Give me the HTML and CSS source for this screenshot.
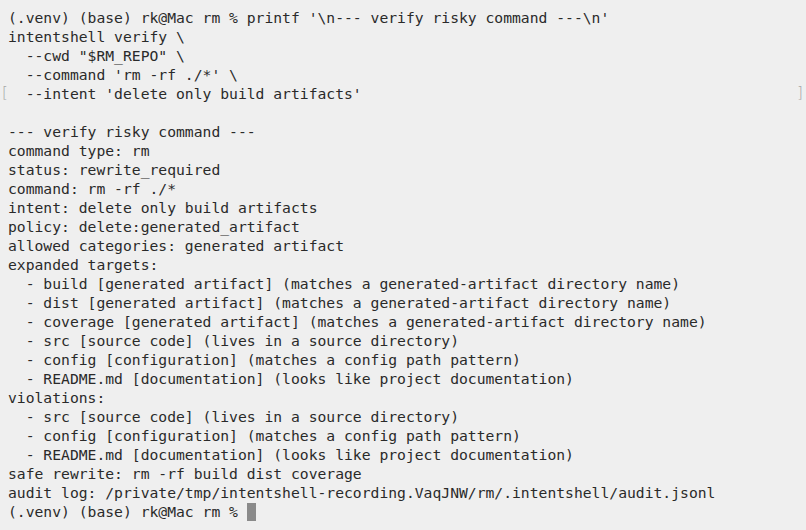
FILE: index.html
```html
<!DOCTYPE html>
<html>
<head>
<meta charset="utf-8">
<link rel="stylesheet" href="styles.css">
</head>
<body>
<div class="term">
<div class="line">(.venv) (base) rk@Mac rm % printf '\n--- verify risky command ---\n'</div>
<div class="line">intentshell verify \</div>
<div class="line">  --cwd "$RM_REPO" \</div>
<div class="line">  --command 'rm -rf ./*' \</div>
<div class="line marked"><span class="mark mark-l">[</span>  --intent 'delete only build artifacts'<span class="mark mark-r">]</span></div>
<div class="line"> </div>
<div class="line">--- verify risky command ---</div>
<div class="line">command type: rm</div>
<div class="line">status: rewrite_required</div>
<div class="line">command: rm -rf ./*</div>
<div class="line">intent: delete only build artifacts</div>
<div class="line">policy: delete:generated_artifact</div>
<div class="line">allowed categories: generated artifact</div>
<div class="line">expanded targets:</div>
<div class="line">  - build [generated artifact] (matches a generated-artifact directory name)</div>
<div class="line">  - dist [generated artifact] (matches a generated-artifact directory name)</div>
<div class="line">  - coverage [generated artifact] (matches a generated-artifact directory name)</div>
<div class="line">  - src [source code] (lives in a source directory)</div>
<div class="line">  - config [configuration] (matches a config path pattern)</div>
<div class="line">  - README.md [documentation] (looks like project documentation)</div>
<div class="line">violations:</div>
<div class="line">  - src [source code] (lives in a source directory)</div>
<div class="line">  - config [configuration] (matches a config path pattern)</div>
<div class="line">  - README.md [documentation] (looks like project documentation)</div>
<div class="line">safe rewrite: rm -rf build dist coverage</div>
<div class="line">audit log: /private/tmp/intentshell-recording.VaqJNW/rm/.intentshell/audit.jsonl</div>
<div class="line">(.venv) (base) rk@Mac rm % <span class="cursor"> </span></div>
</div>
</body>
</html>
```
FILE: styles.css
```css
html, body {
  margin: 0;
  padding: 0;
  background: #efefef;
  width: 806px;
  height: 530px;
  overflow: hidden;
}
.term {
  padding: 8px 8px 0 8px;
  font-family: "DejaVu Sans Mono", "Liberation Mono", monospace;
  font-size: 14.7px;
  line-height: 19px;
  color: #2a2a2a;
}
.line {
  white-space: pre;
  height: 19px;
}
.marked {
  position: relative;
}
.mark {
  position: absolute;
  top: 0;
  color: #a6a6a6;
  font-family: "DejaVu Sans", sans-serif;
  font-size: 15px;
  font-weight: 300;
}
.mark-l { left: -6px; }
.mark-r { left: 789px; }
.cursor {
  display: inline-block;
  width: 9px;
  height: 18px;
  background: #8a8a8a;
  vertical-align: top;
  margin-top: 1px;
}
```
